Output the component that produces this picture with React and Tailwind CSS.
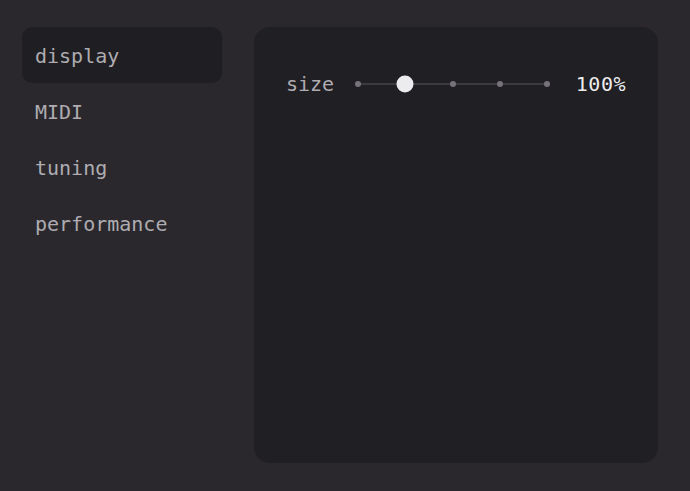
const tabs = ["display", "MIDI", "tuning", "performance"];
const stops = [0, 1, 2, 3, 4];

function SizeSlider({ value = 1 }) {
  return (
    <div className="relative h-4 w-[195px]">
      <div className="absolute left-[3px] right-[3px] top-1/2 h-px -translate-y-1/2 bg-[#58565c]" />
      {stops.map((i) => (
        <div
          key={i}
          className="absolute top-1/2 h-[6px] w-[6px] -translate-y-1/2 rounded-full bg-[#76747a]"
          style={{ left: `${i * 47.25}px` }}
        />
      ))}
      <div
        className="absolute top-1/2 h-[17px] w-[17px] -translate-x-1/2 -translate-y-1/2 rounded-full bg-[#ececee]"
        style={{ left: `${3 + value * 47.25}px` }}
      />
    </div>
  );
}

export default function App() {
  return (
    <div
      className="flex h-[491px] w-[690px] gap-8 bg-[#2a282d] pb-7 pl-[22px] pr-8 pt-[27px]"
      style={{ fontFamily: '"DejaVu Sans Mono", monospace' }}
    >
      <div className="flex w-[200px] flex-col">
        {tabs.map((t, i) => (
          <div
            key={t}
            className={`flex h-14 items-center rounded-[10px] pl-[13px] pt-[2px] text-[20px] text-[#aeacb1] ${
              i === 0 ? "bg-[#1f1e22]" : ""
            }`}
          >
            {t}
          </div>
        ))}
      </div>

      <div className="flex-1 rounded-2xl bg-[#201f23] px-8 pt-8">
        <div className="flex h-12 items-center pt-px">
          <span className="text-[20px] text-[#aeacb1]">size</span>
          <div className="ml-[21px] mr-auto">
            <SizeSlider value={1} />
          </div>
          <span className="text-[20px] tracking-[0.5px] text-[#ececee]">100%</span>
        </div>
      </div>
    </div>
  );
}
